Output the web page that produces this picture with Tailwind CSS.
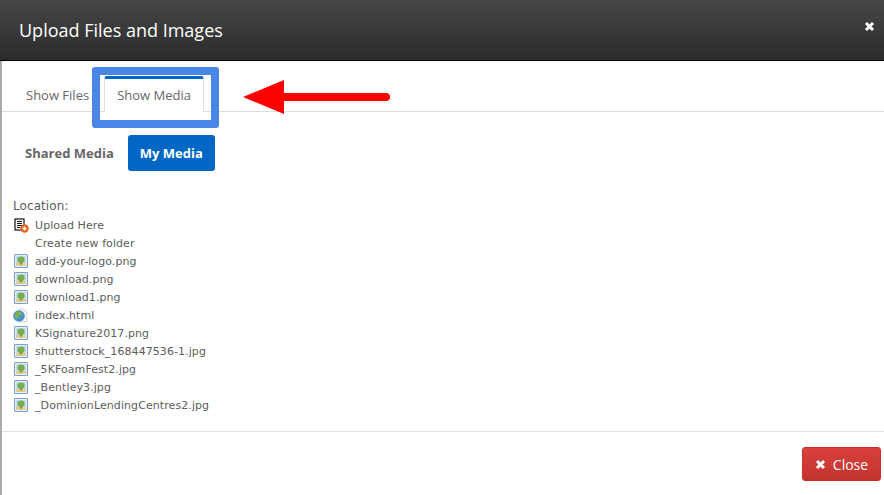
<!DOCTYPE html>
<html>
<head>
<meta charset="utf-8">
<script src="https://cdn.jsdelivr.net/npm/@tailwindcss/browser@4"></script>
</head>
<body class="w-[884px] h-[495px] overflow-hidden bg-white font-['Open_Sans',sans-serif]">
<svg width="0" height="0" class="absolute">
  <defs>
    <symbol id="img" viewBox="0 0 14 14">
      <rect x="0.5" y="0.5" width="13" height="13" rx="0.5" fill="#e6eef8" stroke="#7d9fcb"/>
      <rect x="2" y="2" width="10" height="10" fill="#c4d9ef"/>
      <rect x="2" y="9" width="10" height="3" fill="#d9cf8e"/>
      <ellipse cx="7" cy="5.8" rx="3.6" ry="3.3" fill="#74b04f"/>
      <rect x="6" y="8.500" width="2" height="2" fill="#b07a3c"/>
    </symbol>
  </defs>
</svg>
<div class="relative w-full h-full flex flex-col border-l-2 border-[#aaaaaa]">
  <header class="h-[61px] shrink-0 -ml-[2px] flex items-center justify-between pl-[19px] pr-[9px] bg-gradient-to-b from-[#474747] to-[#2b2b2b] border-b border-black">
    <h1 class="text-[18px] leading-none text-white font-normal pb-[1px]">Upload Files and Images</h1>
    <svg class="w-[11px] h-[11px] mb-[7px]" viewBox="0 0 11 11"><path d="M2 2 L9 9 M9 2 L2 9" stroke="#fff" stroke-width="3"/></svg>
  </header>

  <nav class="h-[51px] shrink-0 flex items-end pl-[11px] border-b border-[#dddddd] text-[13px] text-[#666666]">
    <div class="h-[35px] pl-[13px] pr-[15px] leading-[38px]">Show Files</div>
    <div class="h-[36px] -mb-px px-[12px] leading-[33px] bg-white border-x border-[#dddddd] border-t-[3px] border-t-[#0067c5] rounded-t-[3px]">Show Media</div>
  </nav>

  <div class="flex items-center gap-[2px] pl-[11px] mt-[23px] text-[13px] font-bold">
    <div class="px-[12px] h-[36px] leading-[36px] text-[#666666]">Shared Media</div>
    <div class="px-[12px] h-[36px] leading-[36px] text-white bg-[#0067c5] rounded-[3px]">My Media</div>
  </div>

  <div class="mt-[26px] pl-[11px] text-[11px] leading-[18px] tracking-[0.08px] text-[#5c5c5c] font-['DejaVu_Sans',sans-serif]">
    <div class="text-[12px] leading-[18px] mb-[2px]">Location:</div>
    <ul class="flex flex-col">
      <li class="h-[18px] flex items-center gap-[6px] pl-[1px]">
        <svg class="w-[15px] h-[15px] shrink-0 mb-[1px]" viewBox="0 0 15 15">
          <rect x="1" y="1" width="9" height="11" fill="#fff" stroke="#111" stroke-width="1.2"/>
          <path d="M3 3.500h5M3 5.500h5M3 7.500h5M3 9.500h3" stroke="#111" stroke-width="1"/>
          <circle cx="10.500" cy="10.500" r="4.200" fill="#e2611c"/>
          <path d="M10.500 8.500v4M8.500 10.500h4" stroke="#fff" stroke-width="1.500"/>
        </svg>
        <span>Upload Here</span>
      </li>
      <li class="h-[18px] pl-[22px] leading-[18px]">Create new folder</li>
      <li class="h-[18px] flex items-center gap-[7px] pl-[1px]"><svg class="w-[14px] h-[14px] shrink-0 mb-[2px]" viewBox="0 0 14 14"><use href="#img" width="14" height="14"/></svg><span>add-your-logo.png</span></li>
      <li class="h-[18px] flex items-center gap-[7px] pl-[1px]"><svg class="w-[14px] h-[14px] shrink-0 mb-[2px]" viewBox="0 0 14 14"><use href="#img" width="14" height="14"/></svg><span>download.png</span></li>
      <li class="h-[18px] flex items-center gap-[7px] pl-[1px]"><svg class="w-[14px] h-[14px] shrink-0 mb-[2px]" viewBox="0 0 14 14"><use href="#img" width="14" height="14"/></svg><span>download1.png</span></li>
      <li class="h-[18px] flex items-center gap-[7px]">
        <svg class="w-[15px] h-[15px] shrink-0 mb-[1px]" viewBox="0 0 15 15">
          <path d="M6 1h5l3 3v10H6z" fill="#f6f6f6" stroke="#cfcfcf" stroke-width="0.8"/>
          <circle cx="6" cy="8" r="5.800" fill="#4e8fc7"/>
          <path d="M2.500 4.500c2-1.500 5-1.500 6.500.5s-1 2-2.500 2.500-.5 3-2.500 3-3-4.500-1.500-6z" fill="#79b54a"/>
        </svg>
        <span>index.html</span>
      </li>
      <li class="h-[18px] flex items-center gap-[7px] pl-[1px]"><svg class="w-[14px] h-[14px] shrink-0 mb-[2px]" viewBox="0 0 14 14"><use href="#img" width="14" height="14"/></svg><span>KSignature2017.png</span></li>
      <li class="h-[18px] flex items-center gap-[7px] pl-[1px]"><svg class="w-[14px] h-[14px] shrink-0 mb-[2px]" viewBox="0 0 14 14"><use href="#img" width="14" height="14"/></svg><span>shutterstock_168447536-1.jpg</span></li>
      <li class="h-[18px] flex items-center gap-[7px] pl-[1px]"><svg class="w-[14px] h-[14px] shrink-0 mb-[2px]" viewBox="0 0 14 14"><use href="#img" width="14" height="14"/></svg><span>_5KFoamFest2.jpg</span></li>
      <li class="h-[18px] flex items-center gap-[7px] pl-[1px]"><svg class="w-[14px] h-[14px] shrink-0 mb-[2px]" viewBox="0 0 14 14"><use href="#img" width="14" height="14"/></svg><span>_Bentley3.jpg</span></li>
      <li class="h-[18px] flex items-center gap-[7px] pl-[1px]"><svg class="w-[14px] h-[14px] shrink-0 mb-[2px]" viewBox="0 0 14 14"><use href="#img" width="14" height="14"/></svg><span>_DominionLendingCentres2.jpg</span></li>
    </ul>
  </div>

  <footer class="mt-[16px] h-[64px] border-t border-[#e5e5e5] flex justify-end items-start pt-[15px] pr-[3px]">
    <button class="w-[79px] h-[34px] flex items-center justify-center gap-[7px] rounded-[3px] border border-[#c9302c] bg-gradient-to-b from-[#d9403c] to-[#c23330] text-white text-[14px]">
      <svg class="w-[11px] h-[11px]" viewBox="0 0 11 11"><path d="M2 2 L9 9 M9 2 L2 9" stroke="#fff" stroke-width="3"/></svg>
      Close
    </button>
  </footer>

  <!-- annotations over the screenshot -->
  <div class="absolute left-[90px] top-[67px] w-[127px] h-[61px] border-[8px] border-[#4a86e8] rounded-[3px]"></div>
  <svg class="absolute left-[241px] top-[78px]" width="152" height="38" viewBox="0 0 152 38">
    <path d="M0 19 L41 2 V36 Z" fill="#ff0000"/>
    <path d="M41 19 H143" stroke="#ff0000" stroke-width="8" stroke-linecap="round"/>
  </svg>
</div>
</body>
</html>
